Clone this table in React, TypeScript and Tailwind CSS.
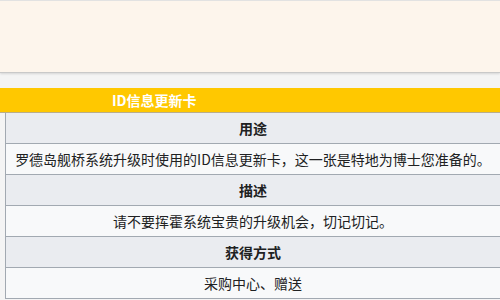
const rows: { head: string; body: string }[] = [
  { head: "用途", body: "罗德岛舰桥系统升级时使用的ID信息更新卡，这一张是特地为博士您准备的。" },
  { head: "描述", body: "请不要挥霍系统宝贵的升级机会，切记切记。" },
  { head: "获得方式", body: "采购中心、赠送" },
];

export default function App() {
  return (
    <div
      className="w-[500px] h-[300px] overflow-hidden bg-[#f4f4f4] text-[#202122]"
      style={{ fontFamily: '"Noto Sans CJK SC", "Liberation Sans", sans-serif' }}
    >
      <div className="h-[73px] border-t border-[#e2e2e2] border-b border-b-[#c9c9c9] bg-[#fdf5ec] shadow-[0_1px_2px_rgba(0,0,0,0.12)]" />
      <div className="h-[15px]" />
      <div className="h-[25px] bg-[#ffc800] border-b border-[#b9ad8a] flex items-center pl-[112px]">
        <span className="text-[14px] font-bold text-white leading-none">ID信息更新卡</span>
      </div>
      <div className="ml-[5px] border-l border-[#a2a9b1]">
        {rows.map((row) => (
          <div key={row.head}>
            <div className="h-[31px] bg-[#eaecf0] border-b border-[#a2a9b1] flex items-center justify-center text-[14px] font-bold">
              {row.head}
            </div>
            <div className="h-[31px] bg-[#f8f9fa] border-b border-[#a2a9b1] flex items-center justify-center text-[14px] whitespace-nowrap">
              {row.body}
            </div>
          </div>
        ))}
      </div>
    </div>
  );
}
